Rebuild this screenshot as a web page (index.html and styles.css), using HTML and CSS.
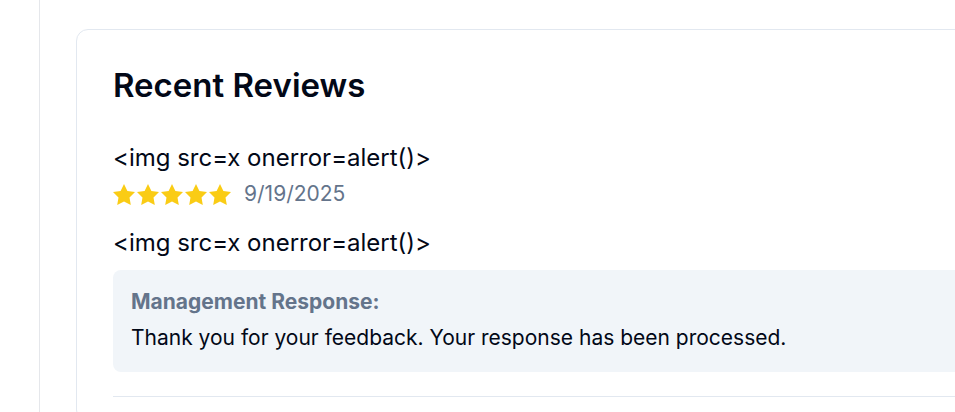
FILE: index.html
```html
<!DOCTYPE html>
<html lang="en">
<head>
<meta charset="utf-8">
<title>Recent Reviews</title>
<link rel="stylesheet" href="styles.css">
</head>
<body>
<div class="layout">
  <main class="main">
    <section class="card">
      <h2 class="card-title">Recent Reviews</h2>
      <article class="review">
        <h3 class="review-title">&lt;img src=x onerror=alert()&gt;</h3>
        <div class="review-meta">
          <div class="stars">
            <svg class="star" viewBox="2 2 20 19.02"><path d="M12 2l3.09 6.26L22 9.27l-5 4.87 1.18 6.88L12 17.770l-6.18 3.25L7 14.14 2 9.27l6.91-1.01L12 2z"/></svg>
            <svg class="star" viewBox="2 2 20 19.02"><path d="M12 2l3.09 6.26L22 9.27l-5 4.87 1.18 6.88L12 17.77l-6.18 3.25L7 14.14 2 9.27l6.91-1.01L12 2z"/></svg>
            <svg class="star" viewBox="2 2 20 19.02"><path d="M12 2l3.09 6.26L22 9.27l-5 4.87 1.18 6.88L12 17.77l-6.18 3.25L7 14.14 2 9.27l6.91-1.01L12 2z"/></svg>
            <svg class="star" viewBox="2 2 20 19.02"><path d="M12 2l3.09 6.26L22 9.27l-5 4.87 1.18 6.88L12 17.77l-6.18 3.25L7 14.14 2 9.27l6.91-1.01L12 2z"/></svg>
            <svg class="star" viewBox="2 2 20 19.02"><path d="M12 2l3.09 6.26L22 9.27l-5 4.87 1.18 6.88L12 17.77l-6.18 3.25L7 14.14 2 9.27l6.91-1.01L12 2z"/></svg>
          </div>
          <span class="review-date">9/19/2025</span>
        </div>
        <p class="review-body">&lt;img src=x onerror=alert()&gt;</p>
        <div class="response">
          <div class="response-label">Management Response:</div>
          <p class="response-text">Thank you for your feedback. Your response has been processed.</p>
        </div>
      </article>
    </section>
  </main>
</div>
</body>
</html>
```

FILE: styles.css
```css
* { box-sizing: border-box; }
html, body { margin: 0; padding: 0; background: #ffffff; }
body {
  font-family: Inter, "Noto Sans", "Liberation Sans", sans-serif;
  color: #020817;
  width: 955px;
  height: 412px;
  overflow: hidden;
}
.layout {
  display: flex;
  height: 100%;
  padding-left: 39px;
}
.main {
  flex: 1;
  border-left: 1px solid #e5e7eb;
  padding: 29px 0 0 36px;
  min-width: 0;
  overflow: hidden;
}
.card {
  width: 1000px;
  border: 1px solid #e2e8f0;
  border-radius: 12px;
  padding: 35px 36px 24px 36px;
  background: #fff;
}
.card-title {
  margin: 0 0 37px;
  font-size: 33px;
  font-weight: 600;
  line-height: 40px;
  letter-spacing: 0;
  color: #020817;
}
.review {
  border-bottom: 1px solid #e2e8f0;
  padding-bottom: 24px;
}
.review-title {
  margin: 0;
  font-size: 24px;
  font-weight: 400;
  line-height: 32px;
  color: #020817;
}
.review-meta {
  display: flex;
  align-items: center;
  gap: 13px;
  margin-top: 6px;
  height: 28px;
}
.stars { display: flex; gap: 2px; }
.star { width: 22px; height: 21px; fill: #facc15; display: block; }
.review-date { font-size: 21px; color: #64748b; line-height: 28px; }
.review-body {
  margin: 19px 0 11px;
  font-size: 24px;
  line-height: 32px;
  color: #020817;
}
.response {
  background: #f1f5f9;
  border-radius: 8px;
  padding: 18px 18px 20px;
}
.response-label {
  font-size: 21px;
  font-weight: 700;
  color: #64748b;
  line-height: 28px;
}
.response-text {
  margin: 8px 0 0;
  font-size: 21px;
  line-height: 28px;
  color: #020817;
}
```
